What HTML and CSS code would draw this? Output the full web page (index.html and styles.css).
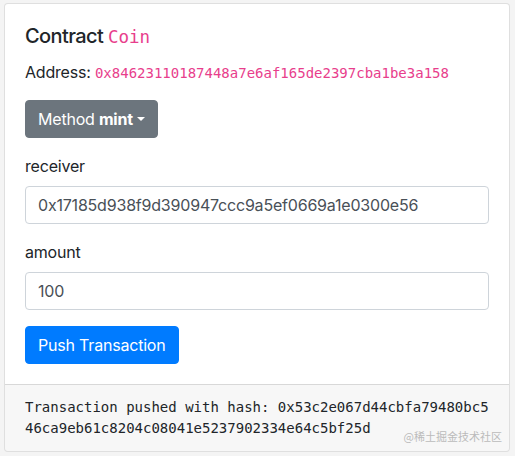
FILE: index.html
```html
<!DOCTYPE html>
<html lang="en">
<head>
    <meta charset="UTF-8">
    <meta name="viewport" content="width=device-width, initial-scale=1.0">
    <title>Contract Coin</title>
    <link rel="stylesheet" href="styles.css">
</head>
<body>
    <div class="card">
        <div class="card-body">
            <h5 class="card-title">Contract <code>Coin</code></h5>
            <p class="card-text">Address: <code>0x84623110187448a7e6af165de2397cba1be3a158</code></p>
            <div class="dropdown">
                <button class="btn btn-secondary dropdown-toggle">Method <b>mint</b></button>
            </div>
            <div class="form-group">
                <label for="receiver">receiver</label>
                <input type="text" id="receiver" class="form-control" value="0x17185d938f9d390947ccc9a5ef0669a1e0300e56">
            </div>
            <div class="form-group">
                <label for="amount">amount</label>
                <input type="text" id="amount" class="form-control" value="100">
            </div>
            <button class="btn btn-primary">Push Transaction</button>
        </div>
        <div class="card-footer">
            <pre class="result">Transaction pushed with hash: 0x53c2e067d44cbfa79480bc546ca9eb61c8204c08041e5237902334e64c5bf25d</pre>
        </div>
        <span class="watermark">@稀土掘金技术社区</span>
    </div>
</body>
</html>
```

FILE: styles.css
```css
body {
	font-family: Inter, "Liberation Sans", Arial, sans-serif;
	font-size: 16px;
	line-height: 1.5;
	letter-spacing: -0.2px;
	color: #212529;
	background-color: #f4f4f4;
	margin: 0;
	padding: 3px 5px 0 4px;
}
code, pre {
	font-family: "DejaVu Sans Mono", monospace;
	letter-spacing: 0;
}
code {
	font-size: 87.5%;
	color: #e83e8c;
}
.card {
	position: relative;
	background-color: #fff;
	border: 1px solid rgba(0,0,0,.125);
	border-radius: 4px;
}
.card-body {
	padding: 20px;
}
.card-title {
	font-size: 20px;
	font-weight: 500;
	line-height: 1.2;
	letter-spacing: -0.6px;
	margin: 0 0 12px;
}
.card-text {
	margin: 0 0 16px;
}
.dropdown {
	margin-bottom: 16px;
}
.btn {
	display: inline-block;
	font-family: inherit;
	font-size: 16px;
	line-height: 1.5;
	letter-spacing: inherit;
	padding: 6px 12px;
	border: 1px solid transparent;
	border-radius: 4px;
	color: #fff;
	cursor: pointer;
}
.btn-secondary {
	background-color: #6c757d;
	border-color: #6c757d;
}
.btn-primary {
	background-color: #007bff;
	border-color: #007bff;
}
.dropdown-toggle::after {
	content: "";
	display: inline-block;
	margin-left: .255em;
	vertical-align: .255em;
	border-top: .3em solid;
	border-right: .3em solid transparent;
	border-left: .3em solid transparent;
}
.form-group {
	margin-bottom: 16px;
}
label {
	display: inline-block;
	margin-bottom: 8px;
}
.form-control {
	display: block;
	width: 100%;
	height: 38px;
	box-sizing: border-box;
	padding: 6px 12px;
	font-family: inherit;
	font-size: 16px;
	line-height: 1.5;
	letter-spacing: inherit;
	color: #495057;
	background-color: #fff;
	border: 1px solid #ced4da;
	border-radius: 4px;
}
.card-footer {
	padding: 12px 20px;
	background-color: rgba(0,0,0,.03);
	border-top: 1px solid rgba(0,0,0,.125);
	border-radius: 0 0 3px 3px;
}
.result {
	margin: 0;
	font-size: 14px;
	line-height: 1.5;
	color: #212529;
	white-space: pre-wrap;
	word-break: break-all;
}
.watermark {
	position: absolute;
	right: 7px;
	bottom: 9px;
	font-family: "Noto Sans CJK SC", sans-serif;
	font-size: 11px;
	line-height: 1;
	letter-spacing: 0;
	color: #bbb;
}
```
